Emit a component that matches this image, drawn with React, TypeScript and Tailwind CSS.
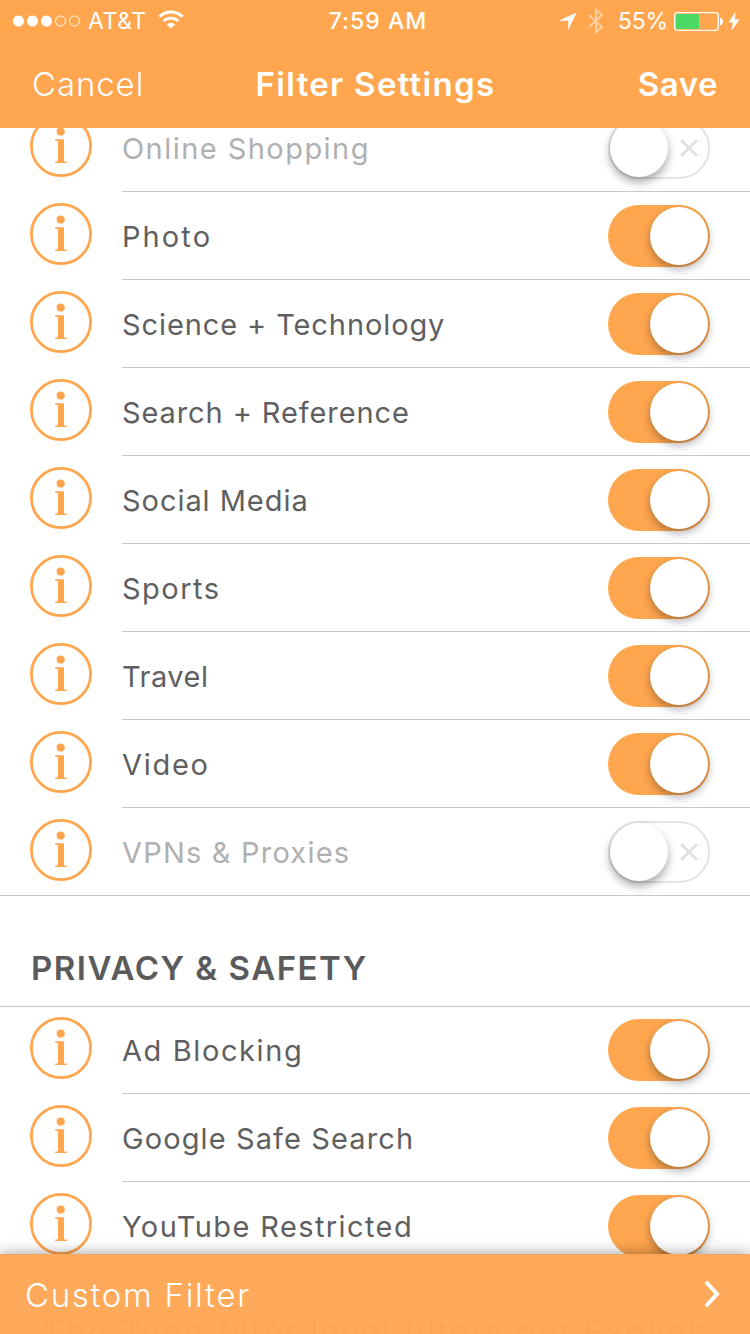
import { useState } from "react";

interface IFilter {
  name: string;
  on: boolean;
  tracking: string;
}

const categories: IFilter[] = [
  { name: "Online Shopping", on: false, tracking: "tracking-[1.45px]" },
  { name: "Photo", on: true, tracking: "tracking-[2.1px]" },
  { name: "Science + Technology", on: true, tracking: "tracking-[0.9px]" },
  { name: "Search + Reference", on: true, tracking: "tracking-[0.9px]" },
  { name: "Social Media", on: true, tracking: "tracking-[0.95px]" },
  { name: "Sports", on: true, tracking: "tracking-[1.5px]" },
  { name: "Travel", on: true, tracking: "tracking-[0.5px]" },
  { name: "Video", on: true, tracking: "tracking-[1.7px]" },
  { name: "VPNs & Proxies", on: false, tracking: "tracking-[1.2px]" },
];

const privacy: IFilter[] = [
  { name: "Ad Blocking", on: true, tracking: "tracking-[1.6px]" },
  { name: "Google Safe Search", on: true, tracking: "tracking-[1.1px]" },
  { name: "YouTube Restricted", on: true, tracking: "tracking-[1.4px]" },
];

function InfoIcon() {
  return (
    <svg width="62" height="62" viewBox="0 0 62 62" className="mt-[11px] shrink-0" fill="#ffa64f">
      <circle cx="31" cy="31" r="29.6" fill="none" stroke="#ffa64f" strokeWidth="2.8" />
      <circle cx="30.7" cy="16.6" r="4.1" />
      <path d="M25 24.2h9v22.400h2.800v1.400H25.200v-1.400H28V26l-3-.6z" />
    </svg>
  );
}

function Toggle({ on, onClick }: { on: boolean; onClick: () => void }) {
  if (on) {
    return (
      <button
        onClick={onClick}
        className="mt-[13px] mr-10 flex h-[62px] w-[102px] shrink-0 items-start justify-end rounded-full bg-[#ffa64f] p-0.5"
      >
        <span className="h-[58px] w-[58px] rounded-full bg-white shadow-[0_4px_10px_rgba(0,0,0,0.33)]"></span>
      </button>
    );
  }
  return (
    <button
      onClick={onClick}
      className="mt-[13px] mr-10 flex h-[62px] w-[102px] shrink-0 items-center rounded-full border-2 border-[#e4e4e8] bg-white"
    >
      <span className="h-[58px] w-[58px] rounded-full bg-white shadow-[0_5px_10px_rgba(0,0,0,0.35)]"></span>
      <svg width="18" height="18" viewBox="0 0 18 18" className="ml-3">
        <path d="M2 2l14 14M16 2L2 16" stroke="#dfdfe1" strokeWidth="2.8" strokeLinecap="round" />
      </svg>
    </button>
  );
}

function Row({ filter, last }: { filter: IFilter; last?: boolean }) {
  const [on, setOn] = useState(filter.on);

  return (
    <li className={`flex h-[88px] ${last ? "border-b border-[#c8c8ca]" : ""}`}>
      <div className="w-[122px] shrink-0 pl-[30px]">
        <InfoIcon />
      </div>
      <div className={`flex flex-1 justify-between ${last ? "" : "border-b border-[#c8c8ca]"}`}>
        <span
          className={`mt-[27px] h-9 text-[29px] leading-9 font-normal whitespace-nowrap ${filter.tracking} ${
            on ? "text-[#5f5f61]" : "text-[#b0b0b0]"
          }`}
        >
          {filter.name}
        </span>
        <Toggle on={on} onClick={() => setOn(!on)} />
      </div>
    </li>
  );
}

function StatusBar() {
  return (
    <div className="grid h-10 grid-cols-3 items-center pt-0.5 text-[23px]">
      <div className="flex items-center pl-[13px]">
        <svg width="68" height="12" viewBox="0 0 68 12" fill="#fff">
          <circle cx="5.5" cy="6" r="5.5" />
          <circle cx="19.5" cy="6" r="5.5" />
          <circle cx="33.5" cy="6" r="5.5" />
          <circle cx="47.5" cy="6" r="5" fill="none" stroke="#fff" />
          <circle cx="61.5" cy="6" r="5" fill="none" stroke="#fff" />
        </svg>
        <span className="ml-[7px] tracking-[0.6px]">AT&amp;T</span>
        <svg width="26" height="19" viewBox="0 0 26 19" className="ml-[11px] -mt-1" fill="none" stroke="#fff">
          <path d="M1.5 6.8a16.3 16.3 0 0 1 23 0" strokeWidth="3" />
          <path d="M5.7 11.1a10.3 10.3 0 0 1 14.6 0" strokeWidth="2.8" />
          <path d="M13 18.6l-4.2-4.2a6 6 0 0 1 8.4 0z" fill="#fff" stroke="none" />
        </svg>
      </div>
      <span className="pl-1.5 text-center font-medium tracking-[1px]">7:59 AM</span>
      <div className="flex items-center justify-end pr-2.5">
        <svg width="19" height="19" viewBox="0 0 19 19" fill="#fff">
          <path d="M18.5 0.5L10.3 18.3V8.7H0.6z" />
        </svg>
        <svg width="16" height="26" viewBox="0 0 16 26" className="ml-[11px]" fill="none" stroke="#ffcf9f" strokeWidth="2">
          <path d="M1 7l13 12-6 5.5v-23L14 7 1 19" />
        </svg>
        <span className="ml-[14px] tracking-[-0.2px]">55%</span>
        <svg width="49" height="19" viewBox="0 0 49 19" className="ml-1.5">
          <rect x="0.7" y="0.7" width="43.6" height="17.6" rx="2.5" fill="none" stroke="#fff" strokeWidth="1.3" />
          <rect x="2" y="2" width="23" height="15" rx="1" fill="#4cd964" />
          <path d="M46 6h1q2 1 2 3.500t-2 3.500h-1z" fill="#fff" />
        </svg>
        <svg width="12" height="19" viewBox="0 0 12 19" className="ml-[5px]" fill="#fff">
          <path d="M7.500 0L0.500 10.500h4.500L3.500 19L11.500 7.500H7z" />
        </svg>
      </div>
    </div>
  );
}

export default function App() {
  return (
    <main className="relative flex h-[1334px] w-[750px] flex-col overflow-hidden bg-white font-['Inter','Liberation_Sans',sans-serif]">
      <header className="h-32 shrink-0 bg-[#ffa64f] text-white">
        <StatusBar />
        <nav className="grid h-[88px] grid-cols-[1fr_auto_1fr] items-center px-8 pt-0.5">
          <button className="text-left text-[33px] font-light tracking-[0.9px]">Cancel</button>
          <h1 className="pl-px text-[33px] font-semibold tracking-[1.3px]">Filter Settings</h1>
          <button className="text-right text-[33px] font-semibold tracking-[0.5px]">Save</button>
        </nav>
      </header>
      <section className="min-h-0 flex-1 overflow-hidden">
        <ul className="-mt-6">
          {categories.map((filter, index) => (
            <Row key={filter.name} filter={filter} last={index === categories.length - 1} />
          ))}
        </ul>
        <h2 className="h-[111px] border-b border-[#c8c8ca] pt-[52px] pl-[31px] text-[33px] leading-10 font-semibold tracking-[1.5px] text-[#5b5b5d]">
          PRIVACY &amp; SAFETY
        </h2>
        <ul className="-mt-px">
          {privacy.map((filter, index) => (
            <Row key={filter.name} filter={filter} last={index === privacy.length - 1} />
          ))}
        </ul>
        <p className="mt-[43px] pl-[42px] text-[34px] leading-10 font-light tracking-[1.85px] whitespace-nowrap text-[#58585a]">
          The Teen filter level filters out Explicit
        </p>
      </section>
      <footer className="absolute inset-x-0 bottom-0 flex h-20 items-center justify-between bg-[#ffa656]/97 pr-[30px] pl-[25px] text-white shadow-[0_0_14px_rgba(0,0,0,0.4)]">
        <span className="pt-[3px] text-[33px] font-light tracking-[1.7px]">Custom Filter</span>
        <svg width="16" height="28" viewBox="0 0 16 28" fill="none" stroke="#fff" strokeWidth="4">
          <path d="M3 3l10 11L3 25" strokeLinecap="round" />
        </svg>
      </footer>
    </main>
  );
}
